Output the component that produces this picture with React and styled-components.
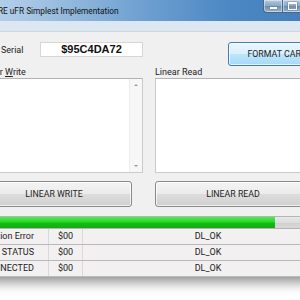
import React from 'react';
import styled, { createGlobalStyle } from 'styled-components';

const GlobalStyle = createGlobalStyle`
    html, body {
        margin: 0;
        padding: 0;
        background: #fff;
    }
    body {
        font-family: Roboto, "Liberation Sans", Arial, sans-serif;
        color: #222;
    }
`;

const Page = styled.div`
    width: 300px;
    height: 300px;
    overflow: hidden;
    background: #fff;
`;

const Window = styled.div`
    width: 410px;
    margin-left: -64px;
    background: #f0f0f0;
    box-shadow: 0 5px 12px rgba(0, 0, 0, 0.45);
    overflow: hidden;
`;

const TitleBar = styled.div`
    height: 21px;
    display: flex;
    align-items: flex-start;
    background: linear-gradient(90deg, #c6dbef 0%, #a9c7e5 22%, #72a3d2 48%, #4b87c3 72%, #3e7bb8 100%);
`;

const TitleText = styled.span`
    margin: 6px 0 0 29px;
    font-size: 8.3px;
    line-height: 10px;
    color: #111;
    white-space: nowrap;
`;

const Controls = styled.div`
    margin-left: auto;
    display: flex;
`;

const CtrlButton = styled.div`
    width: ${props => props.$wide ? 43 : 20}px;
    height: 13px;
    box-sizing: border-box;
    border: 1px solid #4f6580;
    border-top: none;
    border-left: ${props => props.$first ? '1px solid #4f6580' : 'none'};
    border-radius: ${props => props.$first ? '0 0 0 4px' : props.$wide ? '0 0 4px 0' : '0'};
    background: ${props => props.$wide
        ? 'linear-gradient(#e8a493, #d0614a 50%, #c13c22 51%, #d97a5e)'
        : 'linear-gradient(#b3c8de, #8aa6c4 50%, #6b8cb0 51%, #9ab4d0)'};
    box-shadow: inset 0 0 0 1px rgba(255, 255, 255, 0.45);
    display: flex;
    align-items: center;
    justify-content: center;
`;

const MinGlyph = styled.div`
    width: 7px;
    height: 2px;
    margin-top: 4px;
    background: #fff;
    box-shadow: 0 0 1px #2a3a4c;
`;

const MaxGlyph = styled.div`
    width: 7px;
    height: 5px;
    border: 1px solid #fff;
    border-top-width: 2px;
    box-shadow: 0 0 1px #2a3a4c;
`;

const FrameStrip = styled.div`
    height: 10px;
    background: #dde7f1;
    border-bottom: 1px solid #cbd6e1;
`;

const Body = styled.div`
    padding: 10px 0 0 40px;
`;

const SerialRow = styled.div`
    display: flex;
    align-items: flex-start;
    height: 25px;
`;

const SerialLabel = styled.span`
    width: 39px;
    margin-left: 25px;
    margin-top: 3px;
    font-size: 9px;
    line-height: 11px;
`;

const SerialBox = styled.div`
    width: 103px;
    height: 15px;
    box-sizing: border-box;
    background: #fff;
    border: 1px solid #d6d6d6;
    font-family: "Liberation Sans", Arial, sans-serif;
    font-weight: bold;
    font-size: 11px;
    line-height: 13px;
    text-align: center;
    color: #111;
`;

const Button = styled.div`
    width: ${props => props.$width}px;
    height: ${props => props.$height}px;
    box-sizing: border-box;
    border: 1px solid ${props => props.$accent ? '#3c7fb1' : '#8a8a8a'};
    border-radius: 3px;
    background: ${props => props.$accent
        ? 'linear-gradient(#eaf6fd, #d9f0fc 50%, #bee6fd 51%, #a7d9f5)'
        : 'linear-gradient(#f4f4f4, #ebebeb 50%, #dddddd 51%, #cfcfcf)'};
    box-shadow: inset 0 0 0 1px rgba(255, 255, 255, 0.7);
    display: flex;
    align-items: center;
    justify-content: center;
    font-size: 8.8px;
    color: #222;
    white-space: nowrap;
`;

const FormatButton = styled(Button)`
    margin-left: 85px;
`;

const Columns = styled.div`
    display: flex;
    gap: 12px;
`;

const Column = styled.div`
    display: flex;
    flex-direction: column;
`;

const FieldLabel = styled.div`
    height: 11px;
    padding-left: ${props => props.$indent || 0}px;
    font-size: 9px;
    line-height: 10px;
    white-space: nowrap;
    color: #222;
`;

const TextArea = styled.div`
    width: ${props => props.$width}px;
    height: 95px;
    box-sizing: border-box;
    background: #fff;
    border: 1px solid #c9cbcf;
    border-top-color: #b0b3b8;
    display: flex;
    justify-content: flex-end;
    margin-bottom: 8px;
`;

const ScrollBar = styled.div`
    width: 12px;
    background: #f7f7f7;
    border-left: 1px solid #ececec;
    display: flex;
    flex-direction: column;
    justify-content: space-between;
    align-items: center;
    padding: 5px 0;
`;

const Arrow = styled.div`
    width: 0;
    height: 0;
    border-left: 2px solid transparent;
    border-right: 2px solid transparent;
    ${props => props.$down
        ? 'border-top: 2px solid #9a9a9a;'
        : 'border-bottom: 2px solid #9a9a9a;'}
`;

const Progress = styled.div`
    width: 360px;
    height: 13px;
    margin-top: 9px;
    box-sizing: border-box;
    border: 1px solid #b4b4b4;
    background: linear-gradient(#e8e8e8, #dcdcdc 50%, #cfcfcf 51%, #d8d8d8);
`;

const ProgressFill = styled.div`
    height: 100%;
    background: linear-gradient(#53e853, #2ad62a 45%, #0ec10e 55%, #16a816);
`;

const Table = styled.div`
    margin-left: -40px;
`;

const Row = styled.div`
    display: grid;
    grid-template-columns: 113px 34px 1fr;
    height: 16px;
    box-sizing: border-box;
    border-bottom: 1px solid #b9b9b9;
    background: #f2f0f0;
    font-size: 9px;
    line-height: 15px;
    color: #222;
`;

const Cell = styled.div`
    text-align: ${props => props.$align || 'center'};
    padding-right: ${props => props.$pad || 0}px;
    border-right: ${props => props.$last ? 'none' : '1px solid #dadada'};
    white-space: nowrap;
    overflow: hidden;
`;

const statusRows = [
    { name: 'Operation Error', code: '$00', text: 'DL_OK' },
    { name: 'CARD STATUS', code: '$00', text: 'DL_OK' },
    { name: 'CONNECTED', code: '$00', text: 'DL_OK' },
];

const App = () => {
    const progress = 83.3;

    return (
        <Page>
            <GlobalStyle />
            <Window>
                <TitleBar>
                    <TitleText>SOFTWARE uFR Simplest Implementation</TitleText>
                    <Controls>
                        <CtrlButton $first><MinGlyph /></CtrlButton>
                        <CtrlButton><MaxGlyph /></CtrlButton>
                        <CtrlButton $wide />
                    </Controls>
                </TitleBar>
                <FrameStrip />
                <Body>
                    <SerialRow>
                        <SerialLabel>Serial</SerialLabel>
                        <SerialBox>$95C4DA72</SerialBox>
                        <FormatButton $width={98} $height={24} $accent>FORMAT CARD</FormatButton>
                    </SerialRow>
                    <Columns>
                        <Column>
                            <FieldLabel $indent={2}>Linear <u>W</u>rite</FieldLabel>
                            <TextArea $width={167}>
                                <ScrollBar>
                                    <Arrow />
                                    <Arrow $down />
                                </ScrollBar>
                            </TextArea>
                            <Button $width={156} $height={26}>LINEAR WRITE</Button>
                        </Column>
                        <Column>
                            <FieldLabel>Linear Read</FieldLabel>
                            <TextArea $width={160} />
                            <Button $width={156} $height={26}>LINEAR READ</Button>
                        </Column>
                    </Columns>
                    <Progress>
                        <ProgressFill style={{ width: `${progress}%` }} />
                    </Progress>
                    <Table>
                        {statusRows.map((row) => (
                            <Row key={row.name}>
                                <Cell $align="right" $pad={14}>{row.name}</Cell>
                                <Cell>{row.code}</Cell>
                                <Cell $last $pad={13}>{row.text}</Cell>
                            </Row>
                        ))}
                    </Table>
                </Body>
            </Window>
        </Page>
    );
};

export default App;
